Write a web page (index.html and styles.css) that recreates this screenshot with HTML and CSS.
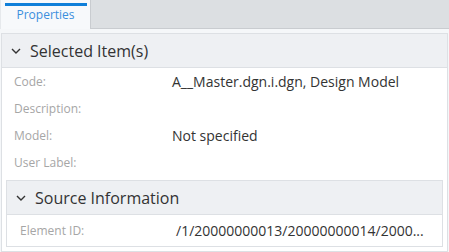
FILE: index.html
```html
<!DOCTYPE html>
<html>
<head>
<meta charset="utf-8">
<link rel="stylesheet" href="styles.css">
</head>
<body>
<div class="app">
  <div class="tabbar">
    <div class="tab"><span class="tab-label">Properties</span></div>
    <div class="tab-fill"></div>
  </div>
  <div class="strip"></div>
  <div class="panel">
    <div class="cat-header">
      <svg class="chev" width="10" height="6" viewBox="0 0 10 6"><polyline points="1,1 5,5 9,1" fill="none" stroke="#333" stroke-width="1.4"/></svg>
      <span class="cat-title">Selected Item(s)</span>
    </div>
    <div class="row"><span class="label">Code:</span><span class="value">A__Master.dgn.i.dgn, Design Model</span></div>
    <div class="row"><span class="label">Description:</span><span class="value"></span></div>
    <div class="row"><span class="label">Model:</span><span class="value">Not specified</span></div>
    <div class="row"><span class="label">User Label:</span><span class="value"></span></div>
    <div class="subcat">
      <div class="cat-header sub">
        <svg class="chev" width="10" height="6" viewBox="0 0 10 6"><polyline points="1,1 5,5 9,1" fill="none" stroke="#333" stroke-width="1.4"/></svg>
        <span class="cat-title">Source Information</span>
      </div>
      <div class="row sub-row"><span class="label">Element ID:</span><span class="value">/1/20000000013/20000000014/2000...</span></div>
    </div>
  </div>
</div>
</body>
</html>
```
FILE: styles.css
```css
html, body {
  margin: 0;
  padding: 0;
  background: #ffffff;
}
.app {
  width: 449px;
  height: 252px;
  background: #f5f7f9;
  font-family: "Open Sans", "Noto Sans", sans-serif;
  overflow: hidden;
}
.tabbar {
  display: flex;
  height: 29px;
}
.tab {
  width: 90px;
  background: #f7f9fb;
  border-left: 1px solid #e6e9ec;
  box-sizing: border-box;
  display: flex;
  flex-direction: column;
  align-items: center;
  padding-top: 3px;
}
.tab::before {
  content: "";
  display: block;
  width: 82px;
  height: 3px;
  background: #0f7fd9;
}
.tab-label {
  color: #3b8fdd;
  font-size: 12px;
  line-height: 16px;
  margin-top: 1px;
}
.tab-fill {
  flex: 1;
  background: #dcdfe2;
  border-left: 1px solid #c9ccd0;
  border-bottom: 1px solid #c9ccd0;
}
.strip {
  height: 4px;
}
.panel {
  margin: 0 1px 0 1px;
  border: 1px solid #dde0e4;
  background: #ffffff;
  height: 217px;
}
.cat-header {
  height: 33px;
  background: #eef0f3;
  border-bottom: 1px solid #dde0e4;
  display: flex;
  align-items: center;
}
.chev {
  margin-left: 9px;
  margin-right: 9px;
}
.cat-title {
  font-size: 16px;
  color: #333333;
}
.row {
  display: flex;
  align-items: center;
  height: 27px;
  padding-left: 12px;
}
.label {
  width: 158px;
  flex: none;
  font-size: 12px;
  color: #a6a6a6;
}
.value {
  font-size: 14px;
  color: #333333;
  white-space: nowrap;
}
.subcat {
  margin: 4px 4px 0 4px;
  border: 1px solid #dde0e4;
}
.sub-row {
  height: 31px;
  padding-left: 13px;
}
.sub-row .label {
  width: 156px;
}
```
